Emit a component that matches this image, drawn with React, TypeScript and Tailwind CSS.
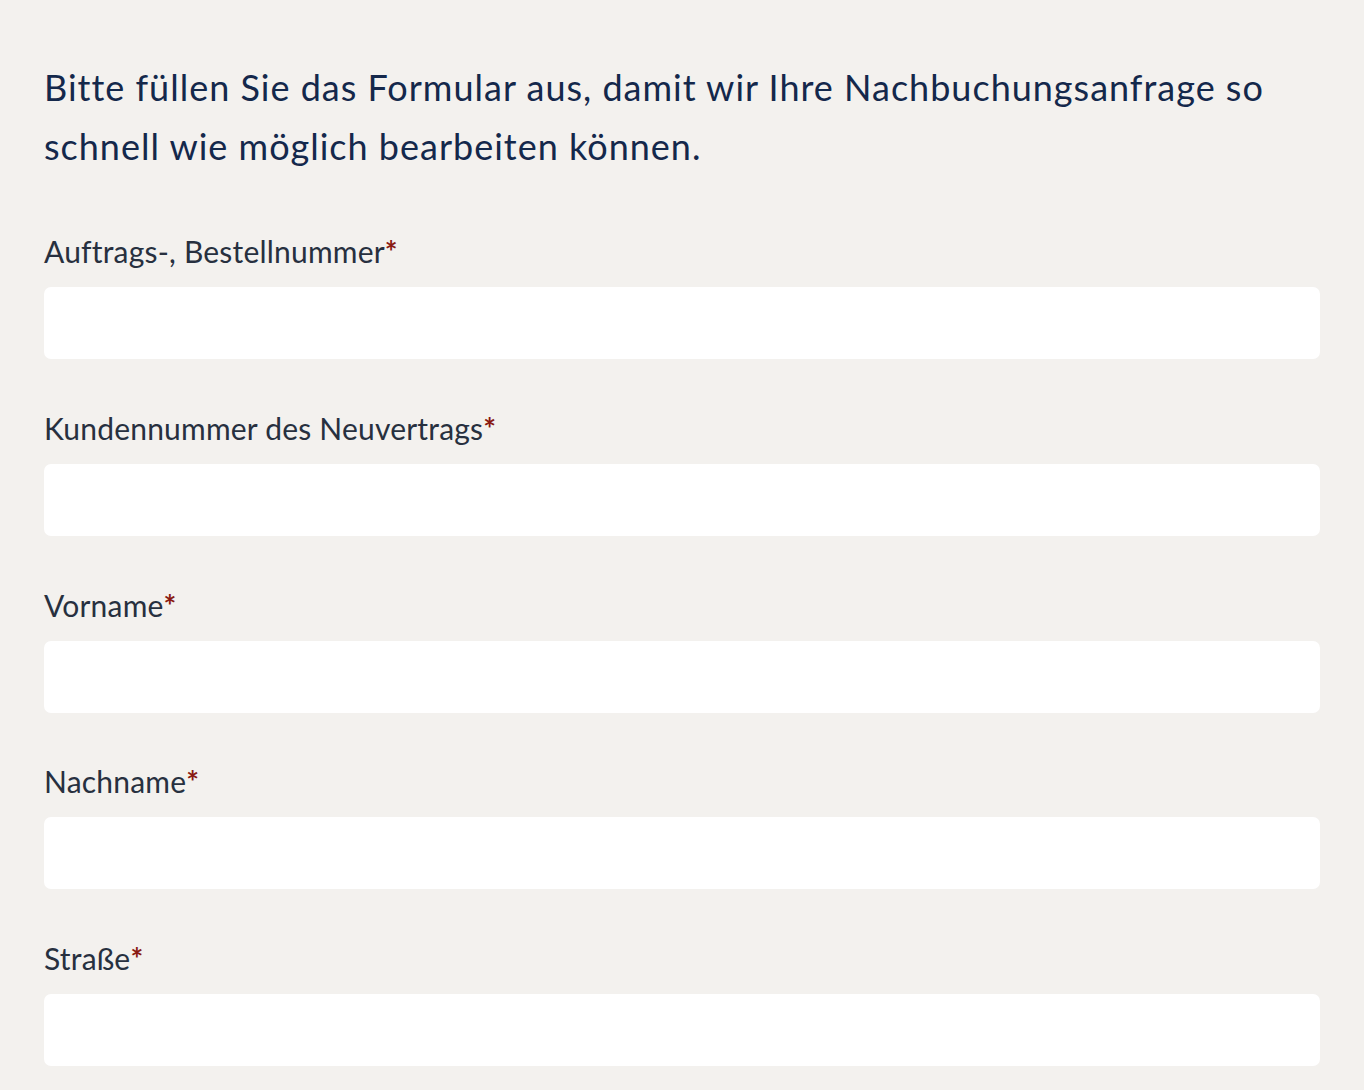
import React from "react";

const fields = [
  "Auftrags-, Bestellnummer",
  "Kundennummer des Neuvertrags",
  "Vorname",
  "Nachname",
  "Straße",
];

export default function App() {
  return (
    <div
      className="min-h-[1090px] w-full bg-[#f3f1ee] px-[44px] pt-[58px] overflow-hidden"
      style={{ fontFamily: "'Source Sans Pro', Lato, 'Noto Sans', sans-serif" }}
    >
      <p className="text-[36px] leading-[59px] tracking-[1px] text-[#14284b]">
        Bitte füllen Sie das Formular aus, damit wir Ihre Nachbuchungsanfrage so
        <br />
        schnell wie möglich bearbeiten können.
      </p>
      <div className="mt-[55px] flex flex-col gap-[48.75px]">
        {fields.map((f) => (
          <div key={f} className="flex flex-col">
            <label className="mb-[16px] text-[30px] leading-[40px] tracking-[0.2px] text-[#27303f]">
              {f}
              <span className="font-bold text-[#8a1a12]">*</span>
            </label>
            <input
              type="text"
              className="h-[72px] w-full rounded-[7px] bg-white outline-none"
            />
          </div>
        ))}
      </div>
    </div>
  );
}
